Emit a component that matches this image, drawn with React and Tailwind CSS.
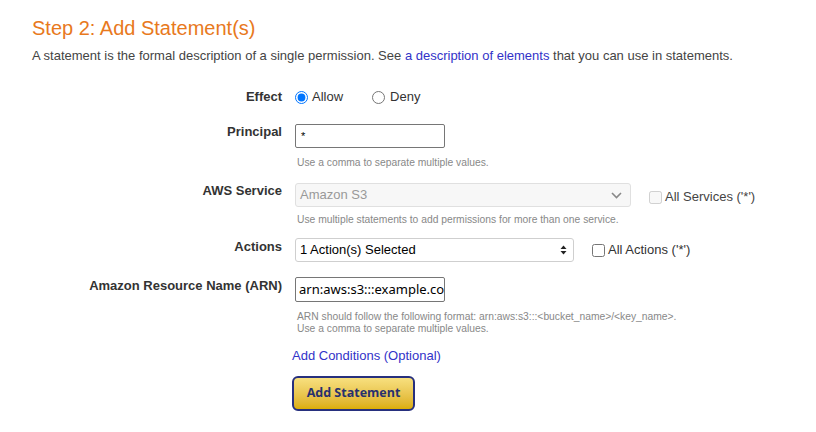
import React from "react";

const Label = ({ children, className = "" }) => (
  <div className={`w-[250px] shrink-0 text-right text-[13px] leading-[14px] font-bold text-[#333] ${className}`}>
    {children}
  </div>
);

const Help = ({ children, className = "" }) => (
  <div className={`ml-[265px] text-[10.3px] leading-[12px] text-[#888] ${className}`}>{children}</div>
);

const App = () => {
  return (
    <div
      className="w-[816px] h-[432px] bg-white px-8 pt-4"
      style={{ fontFamily: '"Liberation Sans", Arial, sans-serif' }}
    >
      <h1 className="text-[20px] leading-6 text-[#e8791d]">Step 2: Add Statement(s)</h1>
      <p className="mt-[7px] text-[13px] leading-[18px] text-[#444]">
        A statement is the formal description of a single permission. See{" "}
        <a href="#" className="text-[#3232c8]">a description of elements</a> that you can use in
        statements.
      </p>

      {/* Effect */}
      <div className="mt-[23px] flex items-center gap-[13px] h-[18px]">
        <div className="w-[250px] shrink-0 text-right text-[13px] font-bold text-[#333]">Effect</div>
        <label className="flex items-center text-[13px] text-[#333]">
          <input type="radio" name="effect" defaultChecked className="m-0 w-[13px] h-[13px]" />
          <span className="ml-[4px]">Allow</span>
        </label>
        <label className="ml-[16px] flex items-center text-[13px] text-[#333]">
          <input type="radio" name="effect" className="m-0 w-[13px] h-[13px]" />
          <span className="ml-[5px]">Deny</span>
        </label>
      </div>

      {/* Principal */}
      <div className="mt-[18px] flex items-start gap-[13px]">
        <Label className="pt-[1px]">Principal</Label>
        <div className="w-[150px] h-[24px] border border-[#767676] rounded-[2px] px-[5px] flex items-center text-[11px] text-black">
          *
        </div>
      </div>
      <Help className="mt-[9px]">Use a comma to separate multiple values.</Help>

      {/* AWS Service */}
      <div className="mt-[14px] flex items-start gap-[13px]">
        <Label className="pt-[1px]">AWS Service</Label>
        <div className="flex items-center">
          <div className="w-[336px] h-[24px] border border-[#e0e0e0] rounded-[3px] bg-[#f7f7f7] pl-[4px] pr-[8px] flex items-center justify-between text-[13px] text-[#999]">
            <span>Amazon S3</span>
            <svg width="11" height="7" viewBox="0 0 11 7" fill="none">
              <path d="M1 1l4.5 4.5L10 1" stroke="#888" strokeWidth="1.6" />
            </svg>
          </div>
          <label className="ml-[18px] mt-[4px] flex items-center text-[13px] text-[#444]">
            <input type="checkbox" disabled className="m-0 w-[13px] h-[13px]" />
            <span className="ml-[3px]">All Services ('*')</span>
          </label>
        </div>
      </div>
      <Help className="mt-[7px]">Use multiple statements to add permissions for more than one service.</Help>

      {/* Actions */}
      <div className="mt-[12px] flex items-start gap-[13px]">
        <Label className="pt-[2px]">Actions</Label>
        <div className="flex items-center">
          <div className="w-[279px] h-[24px] border border-[#cfcfcf] rounded-[3px] bg-white pl-[4px] pr-[6px] flex items-center justify-between text-[13px] text-black">
            <span>1 Action(s) Selected</span>
            <svg width="7" height="10" viewBox="0 0 7 10">
              <path d="M3.5 0.5L6.5 4H0.5z" fill="#222" />
              <path d="M3.5 9.5L6.5 6H0.5z" fill="#222" />
            </svg>
          </div>
          <label className="ml-[18px] flex items-center text-[13px] text-[#333]">
            <input type="checkbox" className="m-0 w-[13px] h-[13px]" />
            <span className="ml-[3px]">All Actions ('*')</span>
          </label>
        </div>
      </div>

      {/* ARN */}
      <div className="mt-[15px] flex items-start gap-[13px]">
        <Label className="pt-[2px]">Amazon Resource Name (ARN)</Label>
        <div
          className="w-[150px] h-[25px] border border-[#767676] rounded-[2px] pl-[3px] flex items-center text-[13px] text-black overflow-hidden whitespace-nowrap"
          style={{ fontFamily: '"Noto Sans", "Open Sans", sans-serif' }}
        >
          arn:aws:s3:::example.co
        </div>
      </div>
      <Help className="mt-[9px]">
        ARN should follow the following format: arn:aws:s3:::&lt;bucket_name&gt;/&lt;key_name&gt;.
        <br />
        Use a comma to separate multiple values.
      </Help>

      <div className="mt-[13px] ml-[260px] text-[13px] leading-4">
        <a href="#" className="text-[#3232c8]">Add Conditions (Optional)</a>
      </div>

      <div className="mt-[12px] ml-[260px]">
        <button
          className="w-[123px] h-[35px] rounded-[6px] border-2 border-[#27307e] bg-gradient-to-b from-[#f8e07e] to-[#dcae00] text-[12.5px] font-bold text-[#27306e]"
          style={{ fontFamily: '"Open Sans", sans-serif' }}
        >
          Add Statement
        </button>
      </div>
    </div>
  );
};

export default App;
